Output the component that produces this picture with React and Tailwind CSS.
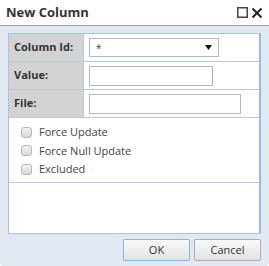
import React from 'react';

const font = { fontFamily: '"Open Sans", "Noto Sans", sans-serif' };

function Row({ label, children, last }) {
  return (
    <div className="flex h-[28px] border-b border-[#b5cae4]">
      <div className="w-[75px] bg-[#d3d3d3] border-r border-[#b5cae4] flex items-center pl-[5px] text-[11px] font-bold text-[#333]">
        {label}
      </div>
      <div className="flex-1 bg-white flex items-center pl-[5px]">{children}</div>
    </div>
  );
}

function Check({ label }) {
  return (
    <div className="flex items-center h-[18.5px] gap-[7px] pl-[12px]">
      <span className="w-[11px] h-[11px] rounded-[3px] border border-[#b8b8b8] bg-gradient-to-b from-[#f4f4f4] to-[#d8d8d8]" />
      <span className="text-[11px] text-[#444]">{label}</span>
    </div>
  );
}

export default function App() {
  return (
    <div className="w-[269px] h-[266px] bg-[#e1e8f1] rounded-b-[4px] overflow-hidden" style={font}>
      {/* Title bar */}
      <div className="h-[26px] bg-white border-b border-[#9a9a9a] flex items-center justify-between pl-[6px] pr-[6px]">
        <span className="text-[13px] font-bold text-[#333]">New Column</span>
        <div className="flex items-center gap-[3px]">
          <svg width="11" height="11" viewBox="0 0 11 11">
            <rect x="0.75" y="0.75" width="9.5" height="9.5" fill="none" stroke="#444" strokeWidth="1.5" />
          </svg>
          <svg width="12" height="12" viewBox="0 0 12 12">
            <path d="M1.5 1.5 L10.5 10.5 M10.5 1.5 L1.5 10.5" stroke="#222" strokeWidth="2" />
          </svg>
        </div>
      </div>

      {/* Body */}
      <div className="pt-[7px] pl-[8px] pr-[8px]">
        <div className="h-[201px] bg-white border border-[#a9c3e3] border-r-2 border-r-[#9bb8e0] flex flex-col">
          <Row label="Column Id:">
            <div className="w-[130px] h-[19px] border border-[#b8b8b8] flex items-center justify-between px-[6px]">
              <span className="text-[10px] text-[#444] leading-none">*</span>
              <svg width="7" height="5" viewBox="0 0 7 5">
                <path d="M0 0 H7 L3.5 5 Z" fill="#111" />
              </svg>
            </div>
          </Row>
          <Row label="Value:">
            <div className="w-[124px] h-[20px] border border-[#b8b8b8]" />
          </Row>
          <Row label="File:">
            <div className="w-[152px] h-[20px] border border-[#b8b8b8]" />
          </Row>
          <div className="h-[65px] border-b border-[#b5cae4] pt-[5px]">
            <Check label="Force Update" />
            <Check label="Force Null Update" />
            <Check label="Excluded" />
          </div>
          <div className="flex-1" />
        </div>

        {/* Buttons */}
        <div className="flex justify-end gap-[4px] mt-[5px]">
          <button className="w-[67px] h-[22px] border border-[#8fb0e0] rounded-[2px] bg-gradient-to-b from-[#fafafa] to-[#e2e2e2] text-[11px] text-[#333]">
            OK
          </button>
          <button className="w-[67px] h-[22px] border border-[#adadad] rounded-[2px] bg-gradient-to-b from-[#fafafa] to-[#e2e2e2] text-[11px] text-[#333]">
            Cancel
          </button>
        </div>
      </div>
    </div>
  );
}
